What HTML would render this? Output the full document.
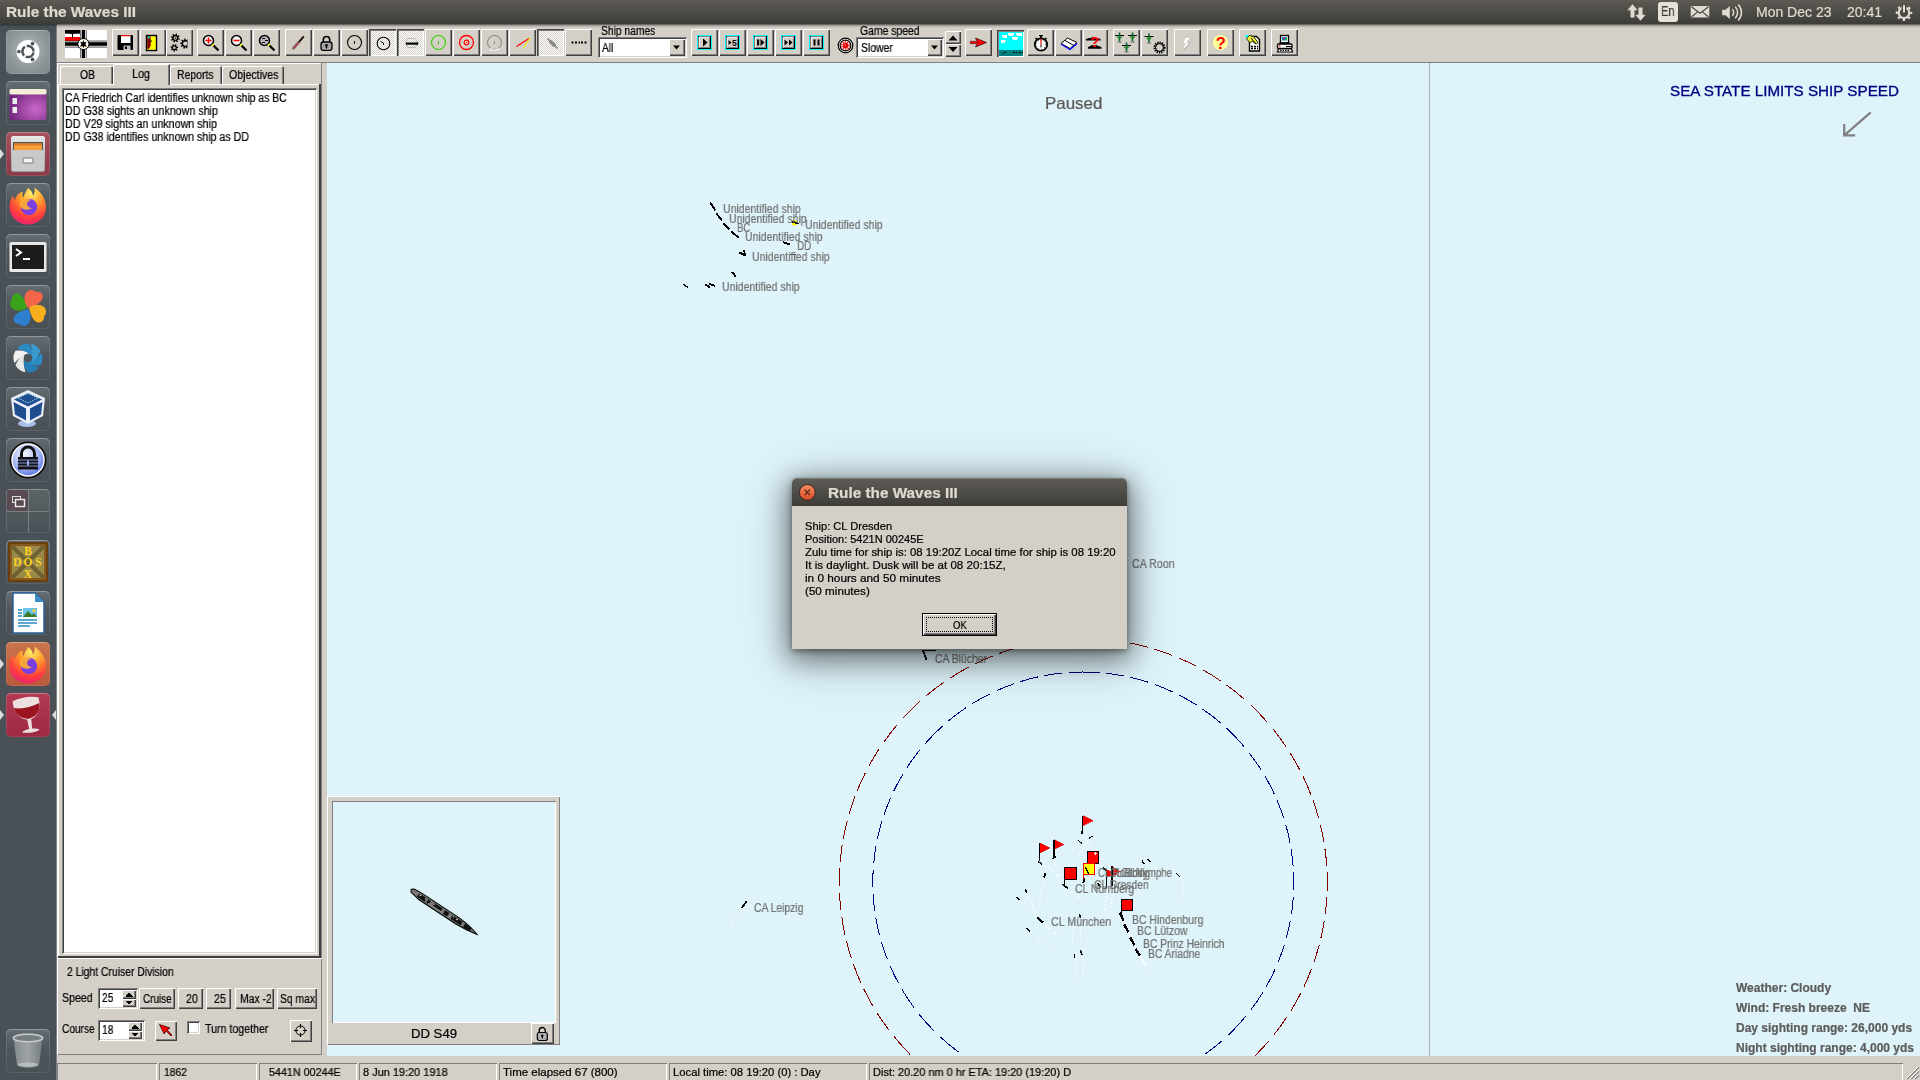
<!DOCTYPE html>
<html><head><meta charset="utf-8"><title>Rule the Waves III</title><style>
html,body{margin:0;padding:0;}
body{width:1920px;height:1080px;overflow:hidden;position:relative;background:#d4d0c8;font-family:"Liberation Sans",sans-serif;}
div{position:absolute;box-sizing:border-box;}
.t{position:absolute;white-space:pre;transform-origin:0 0;will-change:transform;-webkit-text-stroke:.22px;}
.a{position:absolute;overflow:visible;}
</style></head>
<body>
<div style="left:56px;top:24px;width:1864px;height:1056px;background:#d4d0c8;"></div>
<div style="left:327px;top:63px;width:1593px;height:993px;background:#def3fa;"></div>
<div style="left:57px;top:62px;width:1863px;height:1px;background:#808080;"></div>
<div style="left:57px;top:63px;width:264px;height:1px;background:#fff;"></div>
<div style="left:321px;top:63px;width:1px;height:992px;background:#808080;"></div>
<div style="left:1429px;top:63px;width:1px;height:993px;background:#a8aeb0;"></div>
<div style="left:0px;top:0px;width:1920px;height:24px;background:linear-gradient(#5d5b54,#3d3c38);"></div>
<span class="t" style="left:6.0px;top:5px;font-size:14px;line-height:14px;color:#dfdbd2;font-weight:bold;transform:scaleX(1.0969);">Rule the Waves III</span>
<span class="t" style="left:1755.5px;top:5px;font-size:14px;line-height:14px;color:#dfdbd2;">Mon Dec 23</span>
<span class="t" style="left:1847.0px;top:5px;font-size:14px;line-height:14px;color:#dfdbd2;">20:41</span>
<div style="left:1658px;top:2px;width:20px;height:20px;background:#e6e1d8;border-radius:3px;"></div>
<span class="t" style="left:1661.3px;top:3px;font-size:15px;line-height:15px;color:#3c3b37;transform:scaleX(0.7353);">En</span>
<svg class="a" style="left:1626px;top:3px" width="22" height="19"><path d="M6.500 1.200l5.200 6h-3.200v7.300h-4v-7.300h-3.200z" fill="#dfdbd2"/><path d="M14.500 17.800l-5.200-6h3.200v-7.300h4v7.300h3.200z" fill="#dfdbd2"/></svg>
<svg class="a" style="left:1690px;top:5px" width="21" height="14"><rect x=".7" y="1" width="18.600" height="11.500" rx="1" fill="#dfdbd2"/><path d="M1.500 1.800l8.500 6.400 8.500-6.400M1.500 12l6.300-5.300M18.500 12l-6.300-5.300" fill="none" stroke="#44433e" stroke-width="1.100"/></svg>
<svg class="a" style="left:1721px;top:3px" width="24" height="19"><path d="M1.200 6.800h3.300l4.300-3.800v13l-4.300-3.800h-3.300z" fill="#dfdbd2"/><path d="M11.300 6.300a4.500 4.500 0 0 1 0 6.400M14.200 3.800a8 8 0 0 1 0 11.400M17.200 1.600a11.300 11.300 0 0 1 0 15.800" fill="none" stroke="#dfdbd2" stroke-width="1.500"/></svg>
<svg class="a" style="left:1894px;top:3px" width="20" height="19"><circle cx="10" cy="9.800" r="5.300" fill="none" stroke="#dfdbd2" stroke-width="2.200"/><circle cx="10" cy="9.800" r="7.200" fill="none" stroke="#dfdbd2" stroke-width="2.200" stroke-dasharray="2.400 3.250" stroke-dashoffset="1.200"/><rect x="7.800" y="1" width="4.400" height="9" fill="#4a4944"/><rect x="9" y="2" width="2" height="7.500" fill="#dfdbd2"/></svg>
<div style="left:0px;top:24px;width:56px;height:1056px;background:#495156;"></div>
<div style="left:56px;top:24px;width:1px;height:1056px;background:#7d8387;"></div>
<div style="left:57px;top:64px;width:1px;height:991px;background:#fff;"></div>
<div style="left:58px;top:84px;width:262px;height:1px;background:#fff;"></div>
<div style="left:58px;top:84px;width:1px;height:873px;background:#fff;"></div>
<div style="left:319px;top:84px;width:2px;height:874px;background:#404040;"></div>
<div style="left:58px;top:956px;width:263px;height:2px;background:#404040;"></div>
<div style="left:60px;top:66px;width:53px;height:18px;background:#d4d0c8;border-radius:2px 2px 0 0;box-shadow:inset 1px 1px #fff,inset -1px 0 #404040,inset -2px 0 #808080;"></div>
<span class="t" style="left:79.5px;top:69px;font-size:12px;line-height:12px;color:#000;transform:scaleX(0.8649);">OB</span>
<div style="left:170px;top:66px;width:52px;height:18px;background:#d4d0c8;border-radius:2px 2px 0 0;box-shadow:inset 1px 1px #fff,inset -1px 0 #404040,inset -2px 0 #808080;"></div>
<span class="t" style="left:176.5px;top:69px;font-size:12px;line-height:12px;color:#000;transform:scaleX(0.8684);">Reports</span>
<div style="left:222px;top:66px;width:62px;height:18px;background:#d4d0c8;border-radius:2px 2px 0 0;box-shadow:inset 1px 1px #fff,inset -1px 0 #404040,inset -2px 0 #808080;"></div>
<span class="t" style="left:228.5px;top:69px;font-size:12px;line-height:12px;color:#000;transform:scaleX(0.8834);">Objectives</span>
<div style="left:113px;top:64px;width:57px;height:21px;background:#d4d0c8;border-radius:2px 2px 0 0;box-shadow:inset 1px 1px #fff,inset -1px 0 #404040,inset -2px 0 #808080;"></div>
<span class="t" style="left:132.0px;top:68px;font-size:12px;line-height:12px;color:#000;transform:scaleX(0.8986);">Log</span>
<div style="left:62px;top:88px;width:255px;height:866px;background:#fff;box-shadow:inset 1px 1px #808080,inset -1px -1px #fff,inset 2px 2px #404040,inset -2px -2px #d4d0c8;"></div>
<span class="t" style="left:65.4px;top:92px;font-size:12px;line-height:12px;color:#000;transform:scaleX(0.8706);">CA Friedrich Carl identifies unknown ship as BC</span>
<span class="t" style="left:65.4px;top:105px;font-size:12px;line-height:12px;color:#000;transform:scaleX(0.8919);">DD G38 sights an unknown ship</span>
<span class="t" style="left:65.4px;top:118px;font-size:12px;line-height:12px;color:#000;transform:scaleX(0.8930);">DD V29 sights an unknown ship</span>
<span class="t" style="left:65.4px;top:131px;font-size:12px;line-height:12px;color:#000;transform:scaleX(0.8870);">DD G38 identifies unknown ship as DD</span>
<div style="left:57px;top:958px;width:265px;height:97px;background:#d4d0c8;box-shadow:inset 1px 1px #fff,inset -1px -1px #808080;"></div>
<span class="t" style="left:66.6px;top:966px;font-size:12px;line-height:12px;color:#000;transform:scaleX(0.8647);">2 Light Cruiser Division</span>
<span class="t" style="left:61.5px;top:992px;font-size:12px;line-height:12px;color:#000;transform:scaleX(0.8846);">Speed</span>
<span class="t" style="left:61.5px;top:1023px;font-size:12px;line-height:12px;color:#000;transform:scaleX(0.8452);">Course</span>
<div style="left:98px;top:988px;width:40px;height:21px;background:#fff;box-shadow:inset 1px 1px #808080,inset -1px -1px #fff,inset 2px 2px #404040,inset -2px -2px #d4d0c8;"></div>
<span class="t" style="left:101.6px;top:992px;font-size:12px;line-height:12px;color:#000;transform:scaleX(0.8533);">25</span>
<div style="left:98px;top:1020px;width:47px;height:21px;background:#fff;box-shadow:inset 1px 1px #808080,inset -1px -1px #fff,inset 2px 2px #404040,inset -2px -2px #d4d0c8;"></div>
<span class="t" style="left:101.6px;top:1024px;font-size:12px;line-height:12px;color:#000;transform:scaleX(0.8533);">18</span>
<div style="left:122px;top:990px;width:14px;height:9px;background:#d4d0c8;box-shadow:inset 1px 1px #fff,inset -1px -1px #404040,inset -2px -2px #808080;"></div>
<div style="left:122px;top:999px;width:14px;height:8px;background:#d4d0c8;box-shadow:inset 1px 1px #fff,inset -1px -1px #404040,inset -2px -2px #808080;"></div>
<svg class="a" style="left:122px;top:990px" width="14" height="17" shape-rendering="crispEdges"><path d="M3.5 6.5h7l-3.5-4z M3.5 10.5h7l-3.5 4z" fill="#000"/></svg>
<div style="left:128px;top:1022px;width:14px;height:9px;background:#d4d0c8;box-shadow:inset 1px 1px #fff,inset -1px -1px #404040,inset -2px -2px #808080;"></div>
<div style="left:128px;top:1031px;width:14px;height:8px;background:#d4d0c8;box-shadow:inset 1px 1px #fff,inset -1px -1px #404040,inset -2px -2px #808080;"></div>
<svg class="a" style="left:128px;top:1022px" width="14" height="17" shape-rendering="crispEdges"><path d="M3.5 6.5h7l-3.5-4z M3.5 10.5h7l-3.5 4z" fill="#000"/></svg>
<div style="left:139px;top:988px;width:36px;height:21px;background:#d4d0c8;box-shadow:inset 1px 1px #fff,inset -1px -1px #404040,inset -2px -2px #808080;"></div>
<span class="t" style="left:142.6px;top:993px;font-size:12px;line-height:12px;color:#000;transform:scaleX(0.8274);">Cruise</span>
<div style="left:178px;top:988px;width:25px;height:21px;background:#d4d0c8;box-shadow:inset 1px 1px #fff,inset -1px -1px #404040,inset -2px -2px #808080;"></div>
<span class="t" style="left:185.5px;top:993px;font-size:12px;line-height:12px;color:#000;transform:scaleX(0.8833);">20</span>
<div style="left:206px;top:988px;width:25px;height:21px;background:#d4d0c8;box-shadow:inset 1px 1px #fff,inset -1px -1px #404040,inset -2px -2px #808080;"></div>
<span class="t" style="left:213.6px;top:993px;font-size:12px;line-height:12px;color:#000;transform:scaleX(0.8833);">25</span>
<div style="left:235px;top:988px;width:39px;height:21px;background:#d4d0c8;box-shadow:inset 1px 1px #fff,inset -1px -1px #404040,inset -2px -2px #808080;"></div>
<span class="t" style="left:239.6px;top:993px;font-size:12px;line-height:12px;color:#000;transform:scaleX(0.8641);">Max -2</span>
<div style="left:277px;top:988px;width:40px;height:21px;background:#d4d0c8;box-shadow:inset 1px 1px #fff,inset -1px -1px #404040,inset -2px -2px #808080;"></div>
<span class="t" style="left:280.4px;top:993px;font-size:12px;line-height:12px;color:#000;transform:scaleX(0.8602);">Sq max</span>
<div style="left:155px;top:1021px;width:22px;height:20px;background:#d4d0c8;box-shadow:inset 1px 1px #fff,inset -1px -1px #404040,inset -2px -2px #808080;"></div>
<svg class="a" style="left:155px;top:1021px" width="22" height="20"><path d="M4.5 3.5 L9.2 13 L11 9.8 L16 15 L17 14 L12 8.8 L15 7z" fill="#f00" stroke="#400" stroke-width="0.8"/></svg>
<div style="left:187px;top:1021px;width:13px;height:13px;background:#fff;box-shadow:inset 1px 1px #808080,inset -1px -1px #fff,inset 2px 2px #404040,inset -2px -2px #d4d0c8;"></div>
<span class="t" style="left:204.8px;top:1023px;font-size:12px;line-height:12px;color:#000;transform:scaleX(0.8854);">Turn together</span>
<div style="left:290px;top:1020px;width:22px;height:22px;background:#d4d0c8;box-shadow:inset 1px 1px #fff,inset -1px -1px #404040,inset -2px -2px #808080;"></div>
<svg class="a" style="left:290px;top:1020px" width="22" height="22"><circle cx="10.5" cy="10.5" r="4.6" fill="none" stroke="#000" stroke-width="1"/><path d="M10.5 4v4M10.5 13v4M4 10.5h4M13 10.5h4" stroke="#000" stroke-width="1"/></svg>
<div style="left:57px;top:1063px;width:100px;height:17px;box-shadow:inset 1px 1px #808080,inset -1px 0 #fff;"></div>
<div style="left:159px;top:1063px;width:98px;height:17px;box-shadow:inset 1px 1px #808080,inset -1px 0 #fff;"></div>
<div style="left:259px;top:1063px;width:98px;height:17px;box-shadow:inset 1px 1px #808080,inset -1px 0 #fff;"></div>
<div style="left:359px;top:1063px;width:138px;height:17px;box-shadow:inset 1px 1px #808080,inset -1px 0 #fff;"></div>
<div style="left:499px;top:1063px;width:168px;height:17px;box-shadow:inset 1px 1px #808080,inset -1px 0 #fff;"></div>
<div style="left:669px;top:1063px;width:198px;height:17px;box-shadow:inset 1px 1px #808080,inset -1px 0 #fff;"></div>
<div style="left:869px;top:1063px;width:1034px;height:17px;box-shadow:inset 1px 1px #808080,inset -1px 0 #fff;"></div>
<div style="left:57px;top:1062px;width:1863px;height:1px;background:#d4d0c8;"></div>
<span class="t" style="left:164.0px;top:1067px;font-size:11px;line-height:11px;color:#000;transform:scaleX(0.9394);">1862</span>
<span class="t" style="left:269.3px;top:1067px;font-size:11px;line-height:11px;color:#000;transform:scaleX(0.9768);">5441N 00244E</span>
<span class="t" style="left:362.7px;top:1067px;font-size:11px;line-height:11px;color:#000;transform:scaleX(0.9949);">8 Jun 19:20 1918</span>
<span class="t" style="left:503.0px;top:1067px;font-size:11px;line-height:11px;color:#000;transform:scaleX(1.0451);">Time elapsed 67 (800)</span>
<span class="t" style="left:673.0px;top:1067px;font-size:11px;line-height:11px;color:#000;transform:scaleX(1.0222);">Local time: 08 19:20 (0) : Day</span>
<span class="t" style="left:873.0px;top:1067px;font-size:11px;line-height:11px;color:#000;transform:scaleX(0.9944);">Dist: 20.20 nm 0 hr ETA: 19:20 (19:20) D</span>
<svg class="a" style="left:1904px;top:1064px" width="16" height="16"><path d="M15 3L3 15M15 7L7 15M15 11L11 15" stroke="#808080" stroke-width="1.5"/><path d="M15 2L2 15M15 6L6 15M15 10L10 15" stroke="#fff" stroke-width="1"/></svg>
<div style="left:56px;top:24px;width:1864px;height:1px;background:rgba(0,0,0,0.5);"></div>
<div style="left:56px;top:25px;width:1864px;height:1px;background:rgba(0,0,0,0.26);"></div>
<div style="left:56px;top:26px;width:1864px;height:1px;background:rgba(0,0,0,0.1);"></div>
<div style="left:56px;top:27px;width:1864px;height:1px;background:rgba(0,0,0,0.035);"></div>
<div style="left:0px;top:24px;width:56px;height:3px;background:linear-gradient(rgba(0,0,0,.35),rgba(0,0,0,0));"></div>
<svg class="a" style="left:65px;top:30px" width="42" height="28" viewBox="0 0 42 28"><rect x="0" y="0" width="42" height="28" fill="#fff"/><rect x="0" y="0" width="15" height="3.700" fill="#000"/><rect x="0" y="7" width="15" height="4" fill="#f00"/><path d="M7.500 1.500v7M5 3.500h5" stroke="#000" stroke-width="1"/><rect x="0" y="12.200" width="42" height="3.600" fill="#000"/><rect x="0" y="10.700" width="42" height=".700" fill="#000"/><rect x="0" y="16.700" width="42" height=".700" fill="#000"/><rect x="16.700" y="0" width="3.400" height="28" fill="#000"/><rect x="15.200" y="0" width=".800" height="28" fill="#555"/><rect x="20.900" y="0" width=".800" height="28" fill="#555"/><circle cx="18.400" cy="14" r="5.600" fill="#fff" stroke="#000" stroke-width="1"/><path d="M18.400 10l1 2.500 2.500-1-1.500 2.500 1.500 3-2.500-1-1 2-1-2-2.500 1 1.500-3-1.500-2.500 2.500 1z" fill="#000"/><circle cx="16.500" cy="16.500" r=".700" fill="#c80"/><circle cx="20.300" cy="16.500" r=".700" fill="#c80"/><circle cx="18.400" cy="9.800" r=".600" fill="#f80"/></svg>
<div style="left:112px;top:29px;width:27px;height:27px;background:#d4d0c8;box-shadow:inset 1px 1px #fff,inset -1px -1px #404040,inset -2px -2px #808080;"></div>
<svg class="a" style="left:112.0px;top:29px" width="27" height="27" viewBox="0 0 27 27"><path d="M6.5 6h13.5a1 1 0 0 1 1 1v13a1 1 0 0 1-1 1h-13.500a1 1 0 0 1-1-1v-13a1 1 0 0 1 1-1z" fill="#000"/><rect x="9" y="6" width="9.500" height="8" fill="#fff"/><rect x="9" y="6" width="9.500" height="1.200" fill="#f00"/><rect x="11.500" y="16.500" width="7" height="4.500" fill="#c0c0c0"/><rect x="13" y="17.500" width="2" height="2.500" fill="#000"/></svg>
<div style="left:140px;top:29px;width:26px;height:27px;background:#d4d0c8;box-shadow:inset 1px 1px #fff,inset -1px -1px #404040,inset -2px -2px #808080;"></div>
<svg class="a" style="left:139.5px;top:29px" width="27" height="27" viewBox="0 0 27 27"><rect x="6.500" y="6.500" width="10" height="15" fill="#ff0" stroke="#000" stroke-width="1.400"/><path d="M7.200 7.200h3.500v9l-1.500 3.500h-2z" fill="#800000"/><rect x="8" y="7.500" width="1.800" height="1.800" fill="#0ff"/><rect x="10.500" y="11.500" width="1.300" height="1.300" fill="#000"/></svg>
<div style="left:166px;top:29px;width:27px;height:27px;background:#d4d0c8;box-shadow:inset 1px 1px #fff,inset -1px -1px #404040,inset -2px -2px #808080;"></div>
<svg class="a" style="left:166.0px;top:29px" width="27" height="27" viewBox="0 0 27 27"><svg x="0" y="0" width="21.500" height="27" viewBox="0 0 21.500 27"><path d="M22.83 15.32L24.23 16.26L23.70 17.38L22.08 16.89L21.54 17.42L22.00 19.04L20.88 19.55L19.96 18.14L19.21 18.20L18.52 19.74L17.33 19.41L17.53 17.73L16.92 17.30L15.40 18.03L14.70 17.02L15.93 15.86L15.74 15.13L14.10 14.72L14.22 13.50L15.91 13.40L16.23 12.72L15.24 11.35L16.12 10.49L17.47 11.50L18.16 11.19L18.28 9.50L19.50 9.40L19.89 11.05L20.62 11.25L21.79 10.04L22.80 10.75L22.04 12.26L22.46 12.88L24.14 12.71L24.45 13.90L22.90 14.57Z" fill="#000"/><circle cx="19.3" cy="14.6" r="2.2" fill="#d4d0c8"/></svg><path d="M12.40 9.00L13.85 9.65L13.52 10.83L11.94 10.62L11.49 11.19L12.06 12.68L10.99 13.28L10.02 12.01L9.30 12.10L8.65 13.55L7.47 13.22L7.68 11.64L7.11 11.19L5.62 11.76L5.02 10.69L6.29 9.72L6.20 9.00L4.75 8.35L5.08 7.17L6.66 7.38L7.11 6.81L6.54 5.32L7.61 4.72L8.58 5.99L9.30 5.90L9.95 4.45L11.13 4.78L10.92 6.36L11.49 6.81L12.98 6.24L13.58 7.31L12.31 8.28Z" fill="#000"/><circle cx="9.3" cy="9" r="1.7" fill="#d4d0c8"/><circle cx="9.300" cy="9" r="0.700" fill="#000"/><path d="M10.60 19.77L11.60 20.88L10.82 21.77L9.59 20.94L8.97 21.21L8.73 22.68L7.55 22.63L7.43 21.14L6.84 20.83L5.54 21.56L4.84 20.60L5.93 19.58L5.80 18.92L4.42 18.36L4.74 17.22L6.21 17.43L6.65 16.92L6.23 15.50L7.32 15.03L8.07 16.31L8.74 16.34L9.59 15.12L10.64 15.68L10.10 17.07L10.50 17.61L11.98 17.51L12.20 18.68L10.78 19.13Z" fill="#000"/><circle cx="8.3" cy="18.8" r="1.3" fill="#d4d0c8"/></svg>
<div style="left:197px;top:29px;width:27px;height:27px;background:#d4d0c8;box-shadow:inset 1px 1px #fff,inset -1px -1px #404040,inset -2px -2px #808080;"></div>
<svg class="a" style="left:197.0px;top:29px" width="27" height="27" viewBox="0 0 27 27"><circle cx="11.5" cy="11.5" r="5" fill="#f4f4f4" stroke="#000" stroke-width="1.5"/><path d="M15.3 15.3L17 17" stroke="#ff0" stroke-width="2"/><path d="M16.6 16.6L21.5 21.5" stroke="#000" stroke-width="2.2"/><path d="M8.5 11.5h6M11.5 8.5v6" stroke="#f00" stroke-width="1.5"/></svg>
<div style="left:225px;top:29px;width:27px;height:27px;background:#d4d0c8;box-shadow:inset 1px 1px #fff,inset -1px -1px #404040,inset -2px -2px #808080;"></div>
<svg class="a" style="left:225.0px;top:29px" width="27" height="27" viewBox="0 0 27 27"><circle cx="11.5" cy="11.5" r="5" fill="#f4f4f4" stroke="#000" stroke-width="1.5"/><path d="M15.3 15.3L17 17" stroke="#ff0" stroke-width="2"/><path d="M16.6 16.6L21.5 21.5" stroke="#000" stroke-width="2.2"/><path d="M8.5 11.5h6" stroke="#f00" stroke-width="1.5"/></svg>
<div style="left:253px;top:29px;width:27px;height:27px;background:#d4d0c8;box-shadow:inset 1px 1px #fff,inset -1px -1px #404040,inset -2px -2px #808080;"></div>
<svg class="a" style="left:253.0px;top:29px" width="27" height="27" viewBox="0 0 27 27"><circle cx="11.5" cy="11.5" r="5" fill="#b8b8b8" stroke="#000" stroke-width="1.5"/><path d="M15.3 15.3L17 17" stroke="#ff0" stroke-width="2"/><path d="M16.6 16.6L21.5 21.5" stroke="#000" stroke-width="2.2"/><path d="M9 9.5h3M12 11.5h3M9 13.5h3" stroke="#000" stroke-width="1"/></svg>
<div style="left:285px;top:29px;width:27px;height:27px;background:#d4d0c8;box-shadow:inset 1px 1px #fff,inset -1px -1px #404040,inset -2px -2px #808080;"></div>
<svg class="a" style="left:285.0px;top:29px" width="27" height="27" viewBox="0 0 27 27"><path d="M18.800 7.300L12.800 14.300" stroke="#201008" stroke-width="2"/><path d="M13.800 13L7.600 20.300" stroke="#808080" stroke-width="3.200"/><path d="M13.800 13.500L8.600 19.500" stroke="#e00" stroke-width="1"/></svg>
<div style="left:313px;top:29px;width:27px;height:27px;background:#d4d0c8;box-shadow:inset 1px 1px #fff,inset -1px -1px #404040,inset -2px -2px #808080;"></div>
<svg class="a" style="left:313.0px;top:29px" width="27" height="27" viewBox="0 0 27 27"><path d="M10.300 13v-2.300a3.200 3.200 0 0 1 6.400 0v2.300" fill="none" stroke="#000" stroke-width="1.600"/><rect x="8" y="13" width="11" height="8.300" rx="2.400" fill="#b0b0b0" stroke="#000" stroke-width="1.300"/><path d="M9 16h9M9 18.300h9" stroke="#888" stroke-width="0.800"/><circle cx="13.500" cy="16.300" r="1.300" fill="#000"/><rect x="12.900" y="16.500" width="1.200" height="3" fill="#000"/></svg>
<div style="left:341px;top:29px;width:27px;height:27px;background:#d4d0c8;box-shadow:inset 1px 1px #fff,inset -1px -1px #404040,inset -2px -2px #808080;"></div>
<svg class="a" style="left:341.0px;top:29px" width="27" height="27" viewBox="0 0 27 27"><circle cx="13.500" cy="13.500" r="7" fill="none" stroke="#000" stroke-width="1.100"/><rect x="13" y="12" width="1" height="3" fill="#000"/></svg>
<div style="left:369px;top:29px;width:27px;height:27px;background:repeating-conic-gradient(#fff 0 25%,#d4d0c8 0 50%) 0 0/2px 2px;box-shadow:inset 1px 1px #404040,inset 2px 2px #808080,inset -1px -1px #fff;"></div>
<svg class="a" style="left:369.0px;top:29px" width="27" height="27" viewBox="0 0 27 27"><circle cx="14.500" cy="14.500" r="6.300" fill="none" stroke="#000" stroke-width="1.100"/><path d="M11.500 12.500l3 1.500v2" fill="none" stroke="#000" stroke-width="1"/></svg>
<div style="left:397px;top:29px;width:27px;height:27px;background:repeating-conic-gradient(#fff 0 25%,#d4d0c8 0 50%) 0 0/2px 2px;box-shadow:inset 1px 1px #404040,inset 2px 2px #808080,inset -1px -1px #fff;"></div>
<svg class="a" style="left:397.0px;top:29px" width="27" height="27" viewBox="0 0 27 27"><path d="M11 9.500h7l3 4.500-3 4.500h-7l-3-4.500z" fill="none" stroke="#b8b8b8" stroke-width="1"/><rect x="9" y="13.500" width="11" height="2.200" fill="#000"/><path d="M20 12.500l1.500 2-1.500 2z" fill="#000"/></svg>
<div style="left:425px;top:29px;width:27px;height:27px;background:#d4d0c8;box-shadow:inset 1px 1px #fff,inset -1px -1px #404040,inset -2px -2px #808080;"></div>
<svg class="a" style="left:425.0px;top:29px" width="27" height="27" viewBox="0 0 27 27"><circle cx="13.500" cy="13.500" r="7" fill="none" stroke="#3c0" stroke-width="1.100"/><rect x="13" y="12" width="1" height="3" fill="#3c0"/></svg>
<div style="left:453px;top:29px;width:27px;height:27px;background:#d4d0c8;box-shadow:inset 1px 1px #fff,inset -1px -1px #404040,inset -2px -2px #808080;"></div>
<svg class="a" style="left:453.0px;top:29px" width="27" height="27" viewBox="0 0 27 27"><circle cx="13.500" cy="13.500" r="7" fill="none" stroke="#f00" stroke-width="1.300"/><circle cx="13.500" cy="13.500" r="2.300" fill="none" stroke="#f00" stroke-width="1.200"/><rect x="13" y="13" width="1" height="1" fill="#f00"/></svg>
<div style="left:481px;top:29px;width:27px;height:27px;background:#d4d0c8;box-shadow:inset 1px 1px #fff,inset -1px -1px #404040,inset -2px -2px #808080;"></div>
<svg class="a" style="left:481.0px;top:29px" width="27" height="27" viewBox="0 0 27 27"><circle cx="13.500" cy="13.500" r="7" fill="none" stroke="#909090" stroke-width="1.200"/><path d="M9 19.500a7 7 0 0 0 9 0" fill="none" stroke="#fff" stroke-width="1.200"/><rect x="13" y="12" width="1" height="3" fill="#909090"/></svg>
<div style="left:509px;top:29px;width:27px;height:27px;background:#d4d0c8;box-shadow:inset 1px 1px #fff,inset -1px -1px #404040,inset -2px -2px #808080;"></div>
<svg class="a" style="left:509.0px;top:29px" width="27" height="27" viewBox="0 0 27 27"><path d="M7.500 17.500L20 9.500" stroke="#f00" stroke-width="1.200"/><path d="M14 19.500L21 9" stroke="#ee0" stroke-width="1.200"/></svg>
<div style="left:537px;top:29px;width:27px;height:27px;background:repeating-conic-gradient(#fff 0 25%,#d4d0c8 0 50%) 0 0/2px 2px;box-shadow:inset 1px 1px #404040,inset 2px 2px #808080,inset -1px -1px #fff;"></div>
<svg class="a" style="left:537.0px;top:29px" width="27" height="27" viewBox="0 0 27 27"><path d="M10.500 9.500L20.500 19.500" stroke="#888" stroke-width="1.600"/><path d="M13 12l5 5" stroke="#888" stroke-width="3.400"/></svg>
<div style="left:565px;top:29px;width:27px;height:27px;background:#d4d0c8;box-shadow:inset 1px 1px #fff,inset -1px -1px #404040,inset -2px -2px #808080;"></div>
<svg class="a" style="left:565.0px;top:29px" width="27" height="27" viewBox="0 0 27 27"><path d="M6.500 13.500h15" stroke="#000" stroke-width="2" stroke-dasharray="2 1.500 2 1.500 1.500 1 2 1.500 2"/></svg>
<div style="left:965px;top:29px;width:27px;height:27px;background:#d4d0c8;box-shadow:inset 1px 1px #fff,inset -1px -1px #404040,inset -2px -2px #808080;"></div>
<svg class="a" style="left:965.0px;top:29px" width="27" height="27" viewBox="0 0 27 27"><path d="M5 13.500h8" stroke="#f00" stroke-width="2.200"/><path d="M10.500 9l11 4.500-11 4.500 2-4.500z" fill="#f00" stroke="#000" stroke-width="0.600"/><path d="M5 12.300h6M5 14.700h6" stroke="#000" stroke-width="0.500"/></svg>
<div style="left:1027px;top:29px;width:27px;height:27px;background:#d4d0c8;box-shadow:inset 1px 1px #fff,inset -1px -1px #404040,inset -2px -2px #808080;"></div>
<svg class="a" style="left:1027.0px;top:29px" width="27" height="27" viewBox="0 0 27 27"><circle cx="14" cy="15.500" r="6.200" fill="#fff" stroke="#000" stroke-width="1.800"/><rect x="13" y="6.500" width="2" height="2.500" fill="#000"/><path d="M12 6.500h4" stroke="#000" stroke-width="1"/><path d="M8.500 9l1.500 1.500M19.500 9L18 10.500" stroke="#000" stroke-width="1.600"/><path d="M14 15.500v-6" stroke="#f00" stroke-width="1.200"/><path d="M14 15.500v3" stroke="#000" stroke-width="1"/><circle cx="14" cy="15.500" r="4.600" fill="none" stroke="#000" stroke-width="0.900" stroke-dasharray="0.800 2.200"/></svg>
<div style="left:1055px;top:29px;width:27px;height:27px;background:#d4d0c8;box-shadow:inset 1px 1px #fff,inset -1px -1px #404040,inset -2px -2px #808080;"></div>
<svg class="a" style="left:1055.0px;top:29px" width="27" height="27" viewBox="0 0 27 27"><path d="M6 14.500l6.500-5.500 9.500 4.500-7 6z" fill="#fff" stroke="#000" stroke-width="1"/><path d="M10 11.500l9 5" stroke="#000" stroke-width="1"/><path d="M6 15l9 5.500 7-6" fill="none" stroke="#00f" stroke-width="1.300"/></svg>
<div style="left:1083px;top:29px;width:25px;height:27px;background:#d4d0c8;box-shadow:inset 1px 1px #fff,inset -1px -1px #404040,inset -2px -2px #808080;"></div>
<svg class="a" style="left:1082.0px;top:29px" width="27" height="27" viewBox="0 0 27 27"><path d="M4 11.600v-1.500l3-1.200h2.500l1-1.300 1.500 1.300h3.500l3 1.200v1.500z" fill="#000"/><path d="M6 19.800v-1.800l2.500-1 1.500-1 2 .8 2-1.200 1.500 1.400 2 .3 2 1v1.500z" fill="#000"/><text x="8.300" y="18.300" font-family="Liberation Sans" font-weight="bold" font-size="14.500" fill="#f00">?</text></svg>
<div style="left:1113px;top:29px;width:27px;height:27px;background:#d4d0c8;box-shadow:inset 1px 1px #fff,inset -1px -1px #404040,inset -2px -2px #808080;"></div>
<svg class="a" style="left:1113.0px;top:29px" width="27" height="27" viewBox="0 0 27 27"><path d="M2.0 6.5h9" stroke="#000" stroke-width="1"/><path d="M6.5 3.5v9" stroke="#063" stroke-width="1.600"/><path d="M3.5 7.5h6l-1.500 2h-3z" fill="#2a8a2a"/><path d="M4.5 13.0h4" stroke="#777" stroke-width="1.200"/><path d="M15.0 6.5h9" stroke="#000" stroke-width="1"/><path d="M19.5 3.5v9" stroke="#063" stroke-width="1.600"/><path d="M16.5 7.5h6l-1.500 2h-3z" fill="#2a8a2a"/><path d="M17.5 13.0h4" stroke="#777" stroke-width="1.200"/><path d="M9.0 16.5h9" stroke="#000" stroke-width="1"/><path d="M13.5 13.5v9" stroke="#063" stroke-width="1.600"/><path d="M10.5 17.5h6l-1.500 2h-3z" fill="#2a8a2a"/><path d="M11.5 23.0h4" stroke="#777" stroke-width="1.200"/></svg>
<div style="left:1141px;top:29px;width:27px;height:27px;background:#d4d0c8;box-shadow:inset 1px 1px #fff,inset -1px -1px #404040,inset -2px -2px #808080;"></div>
<svg class="a" style="left:1141.0px;top:29px" width="27" height="27" viewBox="0 0 27 27"><path d="M3.5 7.5h9" stroke="#000" stroke-width="1"/><path d="M8 4.5v9" stroke="#063" stroke-width="1.600"/><path d="M5 8.5h6l-1.500 2h-3z" fill="#2a8a2a"/><path d="M6 14.0h4" stroke="#777" stroke-width="1.200"/><circle cx="18.500" cy="18.500" r="4.800" fill="none" stroke="#000" stroke-width="2.400" stroke-dasharray="1.300 0.900"/><circle cx="18.500" cy="18.500" r="3.900" fill="none" stroke="#000" stroke-width="1"/></svg>
<div style="left:1174px;top:29px;width:27px;height:27px;background:#d4d0c8;box-shadow:inset 1px 1px #fff,inset -1px -1px #404040,inset -2px -2px #808080;"></div>
<svg class="a" style="left:1174.0px;top:29px" width="27" height="27" viewBox="0 0 27 27"><path d="M17 9h-5.500l-2 5h2.500l-3 7 7.500-8.500h-3z" fill="#fff"/><path d="M16.500 9.500l-3 4h3l-7 8" fill="none" stroke="#bbb" stroke-width="1.200"/></svg>
<div style="left:1207px;top:29px;width:27px;height:27px;background:#d4d0c8;box-shadow:inset 1px 1px #fff,inset -1px -1px #404040,inset -2px -2px #808080;"></div>
<svg class="a" style="left:1207.0px;top:29px" width="27" height="27" viewBox="0 0 27 27"><circle cx="13.500" cy="13.500" r="7.500" fill="#ff6" /><circle cx="13.500" cy="13.500" r="7.500" fill="#fff" fill-opacity="0.350"/><text x="8.700" y="19.500" font-family="Liberation Sans" font-weight="bold" font-size="16.500" fill="#f00">?</text></svg>
<div style="left:1239px;top:29px;width:27px;height:27px;background:#d4d0c8;box-shadow:inset 1px 1px #fff,inset -1px -1px #404040,inset -2px -2px #808080;"></div>
<svg class="a" style="left:1239.0px;top:29px" width="27" height="27" viewBox="0 0 27 27"><path d="M10.500 7.500h7l3 3v11.500h-10z" fill="#fff" stroke="#000" stroke-width="1.400"/><path d="M12 17.500h7M12 19.500h7" stroke="#000" stroke-width="1.300" stroke-dasharray="2 1"/><path d="M6 6h4l-3 3.500z" fill="#0ff"/><path d="M7.500 9.500l3-3 4 1 4.500 6-2 1.500-3.500-2.500-3 1z" fill="#ee3" stroke="#000" stroke-width="0.800"/><path d="M12 9l5 6" stroke="#000" stroke-width="1"/></svg>
<div style="left:1271px;top:29px;width:27px;height:27px;background:#d4d0c8;box-shadow:inset 1px 1px #fff,inset -1px -1px #404040,inset -2px -2px #808080;"></div>
<svg class="a" style="left:1271.0px;top:29px" width="27" height="27" viewBox="0 0 27 27"><rect x="9.500" y="6.500" width="8" height="7.500" fill="#fff" stroke="#000" stroke-width="1.300"/><rect x="11" y="8" width="5" height="3.500" fill="#088"/><rect x="12" y="8.500" width="2" height="1.500" fill="#e0e"/><rect x="14" y="9.500" width="1.500" height="1.500" fill="#0c0"/><path d="M8.500 14h10" stroke="#000" stroke-width="1.500"/><rect x="6.500" y="15" width="14.500" height="4.500" rx="1" fill="#fff" stroke="#000" stroke-width="1.300"/><rect x="8" y="16.300" width="1.400" height="1.400" fill="#f00"/><path d="M15 17.500h6" stroke="#000" stroke-width="1"/><path d="M7.500 20l-1 3h15l-1-3z" fill="#fff" stroke="#000" stroke-width="1.200"/><path d="M9 21.500h10" stroke="#000" stroke-width="1" stroke-dasharray="1.500 1"/></svg>
<div style="left:691px;top:29px;width:27px;height:27px;background:#d4d0c8;box-shadow:inset 1px 1px #fff,inset -1px -1px #404040,inset -2px -2px #808080;"></div>
<svg class="a" style="left:697px;top:35px" width="15" height="15" viewBox="0 0 15 15"><rect x="0" y="0" width="15" height="15" fill="#0ff"/><rect x="1" y="1" width="13" height="13" fill="#000"/><rect x="2" y="2" width="11" height="11" fill="#d4d0c8"/><path d="M2 13v-11h11" fill="none" stroke="#fff" stroke-width="1"/><path d="M2.500 12.500h10v-10" fill="none" stroke="#808080" stroke-width="1"/><path d="M6 3.500l4.500 4-4.500 4z" fill="#000"/></svg>
<div style="left:719px;top:29px;width:27px;height:27px;background:#d4d0c8;box-shadow:inset 1px 1px #fff,inset -1px -1px #404040,inset -2px -2px #808080;"></div>
<svg class="a" style="left:725px;top:35px" width="15" height="15" viewBox="0 0 15 15"><rect x="0" y="0" width="15" height="15" fill="#0ff"/><rect x="1" y="1" width="13" height="13" fill="#000"/><rect x="2" y="2" width="11" height="11" fill="#d4d0c8"/><path d="M2 13v-11h11" fill="none" stroke="#fff" stroke-width="1"/><path d="M2.500 12.500h10v-10" fill="none" stroke="#808080" stroke-width="1"/><path d="M3.500 5l3 2.500-3 2.500z" fill="#000"/><text x="7" y="10.500" font-family="Liberation Sans" font-weight="bold" font-size="8.500" fill="#000">5</text></svg>
<div style="left:747px;top:29px;width:27px;height:27px;background:#d4d0c8;box-shadow:inset 1px 1px #fff,inset -1px -1px #404040,inset -2px -2px #808080;"></div>
<svg class="a" style="left:753px;top:35px" width="15" height="15" viewBox="0 0 15 15"><rect x="0" y="0" width="15" height="15" fill="#0ff"/><rect x="1" y="1" width="13" height="13" fill="#000"/><rect x="2" y="2" width="11" height="11" fill="#d4d0c8"/><path d="M2 13v-11h11" fill="none" stroke="#fff" stroke-width="1"/><path d="M2.500 12.500h10v-10" fill="none" stroke="#808080" stroke-width="1"/><rect x="4" y="4.500" width="2.200" height="6" fill="#000"/><path d="M7.500 4l4 3.500-4 3.500z" fill="#000"/></svg>
<div style="left:775px;top:29px;width:27px;height:27px;background:#d4d0c8;box-shadow:inset 1px 1px #fff,inset -1px -1px #404040,inset -2px -2px #808080;"></div>
<svg class="a" style="left:781px;top:35px" width="15" height="15" viewBox="0 0 15 15"><rect x="0" y="0" width="15" height="15" fill="#0ff"/><rect x="1" y="1" width="13" height="13" fill="#000"/><rect x="2" y="2" width="11" height="11" fill="#d4d0c8"/><path d="M2 13v-11h11" fill="none" stroke="#fff" stroke-width="1"/><path d="M2.500 12.500h10v-10" fill="none" stroke="#808080" stroke-width="1"/><path d="M3.500 4.500l3.500 3-3.500 3z" fill="#000"/><path d="M8 4.500l3.500 3-3.500 3z" fill="#000"/></svg>
<div style="left:803px;top:29px;width:27px;height:27px;background:#d4d0c8;box-shadow:inset 1px 1px #fff,inset -1px -1px #404040,inset -2px -2px #808080;"></div>
<svg class="a" style="left:809px;top:35px" width="15" height="15" viewBox="0 0 15 15"><rect x="0" y="0" width="15" height="15" fill="#0ff"/><rect x="1" y="1" width="13" height="13" fill="#000"/><rect x="2" y="2" width="11" height="11" fill="#d4d0c8"/><path d="M2 13v-11h11" fill="none" stroke="#fff" stroke-width="1"/><path d="M2.500 12.500h10v-10" fill="none" stroke="#808080" stroke-width="1"/><rect x="4.500" y="4.500" width="2" height="6" fill="#000"/><rect x="8.500" y="4.500" width="2" height="6" fill="#000"/></svg>
<span class="t" style="left:600.7px;top:25px;font-size:12px;line-height:12px;color:#000;transform:scaleX(0.8568);">Ship names</span>
<div style="left:598px;top:37px;width:89px;height:21px;background:#fff;box-shadow:inset 1px 1px #808080,inset -1px -1px #fff,inset 2px 2px #404040,inset -2px -2px #d4d0c8;"></div>
<span class="t" style="left:602.0px;top:42px;font-size:12px;line-height:12px;color:#000;transform:scaleX(0.8393);">All</span>
<div style="left:669px;top:39px;width:16px;height:17px;background:#d4d0c8;box-shadow:inset 1px 1px #fff,inset -1px -1px #404040,inset -2px -2px #808080;"></div>
<svg class="a" style="left:669px;top:39px" width="15" height="17" viewBox="0 0 15 17"><path d="M4 6.500h7l-3.500 4z" fill="#000"/></svg>
<svg class="a" style="left:837px;top:37px" width="17" height="17" viewBox="0 0 17 17"><circle cx="8.500" cy="8.500" r="7.300" fill="#fff" stroke="#000" stroke-width="1.200"/><circle cx="8.500" cy="8.500" r="5.400" fill="#fff" stroke="#000" stroke-width="1.200"/><circle cx="8.500" cy="8.500" r="3.900" fill="#fff" stroke="#f00" stroke-width="1.200" stroke-dasharray="1.400 1.050"/><circle cx="8.500" cy="8.500" r="2.900" fill="#e00000"/><circle cx="8" cy="8" r="1" fill="#f55"/></svg>
<span class="t" style="left:859.7px;top:25px;font-size:12px;line-height:12px;color:#000;transform:scaleX(0.8673);">Game speed</span>
<div style="left:856px;top:37px;width:88px;height:21px;background:#fff;box-shadow:inset 1px 1px #808080,inset -1px -1px #fff,inset 2px 2px #404040,inset -2px -2px #d4d0c8;"></div>
<span class="t" style="left:860.5px;top:42px;font-size:12px;line-height:12px;color:#000;transform:scaleX(0.8668);">Slower</span>
<div style="left:927px;top:39px;width:15px;height:17px;background:#d4d0c8;box-shadow:inset 1px 1px #fff,inset -1px -1px #404040,inset -2px -2px #808080;"></div>
<svg class="a" style="left:927px;top:39px" width="15" height="17" viewBox="0 0 15 17"><path d="M4 6.500h7l-3.500 4z" fill="#000"/></svg>
<div style="left:945px;top:31px;width:16px;height:13px;background:#d4d0c8;box-shadow:inset 1px 1px #fff,inset -1px -1px #404040,inset -2px -2px #808080;"></div>
<div style="left:945px;top:44px;width:16px;height:13px;background:#d4d0c8;box-shadow:inset 1px 1px #fff,inset -1px -1px #404040,inset -2px -2px #808080;"></div>
<svg class="a" style="left:945px;top:31px" width="16" height="26" viewBox="0 0 16 26"><path d="M3.500 9.500h9l-4.500-5z M3.500 16h9l-4.500 5z" fill="#000"/></svg>
<div style="left:997px;top:30px;width:27px;height:27px;background:#d4d0c8;box-shadow:inset 1px 1px #404040,inset 2px 2px #808080,inset -1px -1px #fff;"></div>
<svg class="a" style="left:999px;top:32px" width="24" height="24" viewBox="0 0 24 24" shape-rendering="crispEdges"><rect width="24" height="24" fill="#0ff"/><rect y="18" width="24" height="6" fill="#008080"/><path d="M3 4h5M4 5.500h4M9 2h6M10 3.500h4M17 2h6M18 3.500h5M13 6h6M14 7.500h4M2 8.500h5M2 10h4" stroke="#fff" stroke-width="1.400"/><path d="M3 21h1M4.500 20h2M14 20.500h1.500M17 20.500h1M20 20h1.500M22.500 20h1" stroke="#000" stroke-width="1"/></svg>
<svg class="a" style="left:327px;top:63px;overflow:hidden" width="1593" height="993" viewBox="0 0 1593 993" shape-rendering="crispEdges"><path d="M756.3 575.5A244 244 0 0 1 773.4 576.1M779.5 576.6A244 244 0 0 1 797.5 579.0M803.5 580.1A244 244 0 0 1 821.4 584.3M827.5 586.1A244 244 0 0 1 845.4 592.4M851.6 594.9A244 244 0 0 1 869.4 603.3M875.6 606.6A244 244 0 0 1 893.4 617.7M899.6 622.0A244 244 0 0 1 917.4 636.3M923.5 641.8A244 244 0 0 1 940.5 659.5M945.6 665.5A244 244 0 0 1 958.9 683.5M962.8 689.6A244 244 0 0 1 973.1 707.5M976.1 713.5A244 244 0 0 1 983.8 731.4M986.1 737.6A244 244 0 0 1 991.7 755.4M993.3 761.6A244 244 0 0 1 997.0 779.4M997.9 785.6A244 244 0 0 1 999.8 803.4M1000.1 809.5A244 244 0 0 1 1000.2 827.5M999.9 833.6A244 244 0 0 1 998.2 851.4M997.3 857.6A244 244 0 0 1 993.8 875.5M992.3 881.6A244 244 0 0 1 986.8 899.5M984.6 905.6A244 244 0 0 1 977.1 923.4M974.1 929.5A244 244 0 0 1 964.1 947.4M960.2 953.5A244 244 0 0 1 947.2 971.4M942.2 977.5A244 244 0 0 1 925.5 995.3M919.5 1000.9A244 244 0 0 1 901.6 1015.5M895.4 1020.0A244 244 0 0 1 877.5 1031.2M871.4 1034.6A244 244 0 0 1 853.5 1043.3M847.4 1045.8A244 244 0 0 1 829.5 1052.3M823.4 1054.1A244 244 0 0 1 805.6 1058.5M799.4 1059.7A244 244 0 0 1 781.5 1062.2M775.4 1062.8A244 244 0 0 1 757.6 1063.5M751.4 1063.5A244 244 0 0 1 733.6 1062.4M727.5 1061.8A244 244 0 0 1 709.6 1059.0M703.5 1057.7A244 244 0 0 1 685.6 1053.0M679.5 1051.1A244 244 0 0 1 661.6 1044.4M655.4 1041.7A244 244 0 0 1 637.6 1032.7M631.5 1029.2A244 244 0 0 1 613.5 1017.4M607.4 1012.8A244 244 0 0 1 589.5 997.6M583.1 991.4A244 244 0 0 1 567.1 973.6M562.3 967.5A244 244 0 0 1 549.8 949.5M546.1 943.4A244 244 0 0 1 536.6 925.6M533.7 919.5A244 244 0 0 1 526.5 901.5M524.4 895.5A244 244 0 0 1 519.3 877.6M517.9 871.5A244 244 0 0 1 514.7 853.5M513.9 847.4A244 244 0 0 1 512.5 829.6M512.3 823.4A244 244 0 0 1 512.7 805.5M513.1 799.4A244 244 0 0 1 515.3 781.5M516.3 775.5A244 244 0 0 1 520.3 757.6M522.0 751.4A244 244 0 0 1 528.0 733.5M530.3 727.5A244 244 0 0 1 538.5 709.6M541.7 703.4A244 244 0 0 1 552.3 685.6M556.5 679.5A244 244 0 0 1 570.3 661.6M575.7 655.5A244 244 0 0 1 593.5 637.8M599.5 632.5A244 244 0 0 1 617.4 618.9M623.5 614.8A244 244 0 0 1 641.4 604.2M647.5 601.1A244 244 0 0 1 665.4 593.1M671.6 590.7A244 244 0 0 1 689.4 584.8M695.6 583.2A244 244 0 0 1 713.4 579.3M719.6 578.3A244 244 0 0 1 737.4 576.2M743.6 575.8A244 244 0 0 1 756.3 575.5" fill="none" stroke="#800000" stroke-width="1"/><path d="M756.3 609.0A210.5 210.5 0 0 1 773.4 609.7M779.5 610.3A210.5 210.5 0 0 1 797.4 613.1M803.5 614.4A210.5 210.5 0 0 1 821.5 619.3M827.6 621.4A210.5 210.5 0 0 1 845.4 628.8M851.6 631.8A210.5 210.5 0 0 1 869.5 642.0M875.5 646.0A210.5 210.5 0 0 1 893.5 659.8M899.5 665.2A210.5 210.5 0 0 1 917.0 683.5M921.9 689.6A210.5 210.5 0 0 1 934.5 707.5M938.2 713.6A210.5 210.5 0 0 1 947.5 731.4M950.2 737.6A210.5 210.5 0 0 1 956.8 755.4M958.7 761.5A210.5 210.5 0 0 1 963.0 779.5M964.0 785.5A210.5 210.5 0 0 1 966.2 803.4M966.6 809.5A210.5 210.5 0 0 1 966.6 827.5M966.3 833.6A210.5 210.5 0 0 1 964.4 851.4M963.3 857.5A210.5 210.5 0 0 1 959.2 875.4M957.4 881.6A210.5 210.5 0 0 1 951.0 899.4M948.4 905.5A210.5 210.5 0 0 1 939.3 923.5M935.8 929.5A210.5 210.5 0 0 1 923.5 947.4M918.6 953.5A210.5 210.5 0 0 1 901.5 971.9M895.4 977.5A210.5 210.5 0 0 1 877.6 991.5M871.5 995.7A210.5 210.5 0 0 1 853.6 1006.2M847.4 1009.2A210.5 210.5 0 0 1 829.6 1016.8M823.5 1019.0A210.5 210.5 0 0 1 805.6 1024.1M799.5 1025.5A210.5 210.5 0 0 1 781.6 1028.5M775.4 1029.1A210.5 210.5 0 0 1 757.6 1030.0M751.4 1029.9A210.5 210.5 0 0 1 733.6 1028.8M727.4 1028.0A210.5 210.5 0 0 1 709.6 1024.7M703.5 1023.3A210.5 210.5 0 0 1 685.6 1017.8M679.5 1015.5A210.5 210.5 0 0 1 661.6 1007.5M655.5 1004.3A210.5 210.5 0 0 1 637.6 993.3M631.5 989.0A210.5 210.5 0 0 1 613.5 974.2M607.5 968.4A210.5 210.5 0 0 1 591.6 950.6M586.9 944.4A210.5 210.5 0 0 1 575.0 926.5M571.6 920.4A210.5 210.5 0 0 1 562.9 902.6M560.4 896.4A210.5 210.5 0 0 1 554.3 878.6M552.6 872.4A210.5 210.5 0 0 1 548.7 854.6M547.8 848.4A210.5 210.5 0 0 1 546.1 830.6M545.9 824.5A210.5 210.5 0 0 1 546.2 806.5M546.7 800.4A210.5 210.5 0 0 1 549.1 782.6M550.3 776.4A210.5 210.5 0 0 1 554.8 758.5M556.8 752.4A210.5 210.5 0 0 1 563.7 734.6M566.5 728.5A210.5 210.5 0 0 1 576.2 710.6M580.0 704.4A210.5 210.5 0 0 1 593.1 686.6M598.3 680.5A210.5 210.5 0 0 1 615.5 663.0M621.5 657.8A210.5 210.5 0 0 1 639.4 644.4M645.5 640.5A210.5 210.5 0 0 1 663.5 630.6M669.6 627.7A210.5 210.5 0 0 1 687.5 620.6M693.5 618.6A210.5 210.5 0 0 1 711.4 613.8M717.5 612.6A210.5 210.5 0 0 1 735.5 610.0M741.6 609.5A210.5 210.5 0 0 1 756.3 609.0" fill="none" stroke="#000080" stroke-width="1"/><path d="M755.8 772.4L760.0 779.0L764.7 785.7" fill="none" stroke="#fff" stroke-width="1" stroke-dasharray="2 2"/><path d="M761.0 777.6L755.0 787.0L750.6 795.4" fill="none" stroke="#fff" stroke-width="1" stroke-dasharray="2 2"/><path d="M725.4 796.0L729.0 804.0L732.9 813.0" fill="none" stroke="#fff" stroke-width="1" stroke-dasharray="2 2"/><path d="M713.6 800.6L719.5 804.3L728.4 809.4L733.0 815.0" fill="none" stroke="#fff" stroke-width="1" stroke-dasharray="2 2"/><path d="M717.7 812.4L717.3 817.0L714.3 826.5L712.9 837.6L713.0 843.0" fill="none" stroke="#fff" stroke-width="1" stroke-dasharray="2 2"/><path d="M698.5 827.0L700.3 831.7L703.2 839.0L709.0 849.0L713.0 854.0" fill="none" stroke="#fff" stroke-width="1" stroke-dasharray="2 2"/><path d="M691.0 836.0L698.0 839.8L707.0 849.0L716.0 859.0" fill="none" stroke="#fff" stroke-width="1" stroke-dasharray="2 2"/><path d="M716.0 859.0L725.0 869.0L733.0 873.0" fill="none" stroke="#fff" stroke-width="1" stroke-dasharray="2 2"/><path d="M703.0 869.0L713.0 879.0L725.0 887.0" fill="none" stroke="#fff" stroke-width="1" stroke-dasharray="2 2"/><path d="M740.9 825.7L744.0 828.7L755.0 837.6L759.0 840.0" fill="none" stroke="#fff" stroke-width="1" stroke-dasharray="2 2"/><path d="M754.0 855.0L754.0 867.0L753.0 879.0" fill="none" stroke="#fff" stroke-width="1" stroke-dasharray="2 2"/><path d="M747.0 863.0L745.0 875.0L746.0 883.0" fill="none" stroke="#fff" stroke-width="1" stroke-dasharray="2 2"/><path d="M755.0 892.0L757.0 905.0L755.0 912.0" fill="none" stroke="#fff" stroke-width="1" stroke-dasharray="2 2"/><path d="M748.0 895.0L748.0 909.0L751.0 919.0" fill="none" stroke="#fff" stroke-width="1" stroke-dasharray="2 2"/><path d="M781.0 825.0L779.0 837.0L777.0 847.0" fill="none" stroke="#fff" stroke-width="1" stroke-dasharray="2 2"/><path d="M787.0 827.0L785.0 839.0L783.0 845.0" fill="none" stroke="#fff" stroke-width="1" stroke-dasharray="2 2"/><path d="M823.0 799.0L831.0 807.0L839.0 809.0" fill="none" stroke="#fff" stroke-width="1" stroke-dasharray="2 2"/><path d="M853.0 814.0L857.0 823.0L855.0 835.0" fill="none" stroke="#fff" stroke-width="1" stroke-dasharray="2 2"/><path d="M383.1 139.4L388.5 147.5" stroke="#000" stroke-width="2"/><path d="M389.3 150.3L394.8 157.4" stroke="#000" stroke-width="2"/><path d="M396.0 160.4L402.6 166.4" stroke="#000" stroke-width="2"/><path d="M404.0 168.4L411.8 174.6" stroke="#000" stroke-width="2"/><circle cx="467.6" cy="159.8" r="2.8" fill="#ff0"/><path d="M465.0 158.6L471.6 160.6" stroke="#000" stroke-width="2"/><path d="M456.1 179.2L463.0 181.5" stroke="#000" stroke-width="2"/><path d="M412.3 189.6L418.6 192.4" stroke="#000" stroke-width="2"/><path d="M416.6 187.4L418.2 191.5" stroke="#000" stroke-width="1.6"/><path d="M463.4 191.4L468.7 191.4" stroke="#000" stroke-width="1"/><path d="M405.1 209.0L408.8 213.6" stroke="#000" stroke-width="2"/><path d="M356.1 221.1L361.0 224.6" stroke="#000" stroke-width="1.3"/><path d="M378.5 221.5L383.0 224.8" stroke="#000" stroke-width="2"/><path d="M382.0 220.6L388.0 223.0" stroke="#000" stroke-width="2"/><path d="M419.6 838.2L414.6 845.2" stroke="#000" stroke-width="1.8"/><path d="M414.0 845.0L409.0 853.0L404.0 861.0" fill="none" stroke="#fff" stroke-width="1" stroke-dasharray="2 2"/><path d="M609 587.5H596L599.5 597" fill="none" stroke="#000" stroke-width="1.800"/><path d="M801.0 495.5L808.0 492.5L816.0 490.5" fill="none" stroke="#fff" stroke-width="1" stroke-dasharray="2 2"/><path d="M698.0 826.4L699.9 829.5" stroke="#000" stroke-width="1.6"/><path d="M689.2 834.2L693.0 836.8" stroke="#000" stroke-width="1.3"/><path d="M710.2 854.2L715.8 859.3" stroke="#000" stroke-width="2.2"/><path d="M699.2 865.1L702.8 868.3" stroke="#000" stroke-width="1.4"/><path d="M752.4 851.0L753.6 855.1" stroke="#000" stroke-width="1.5"/><path d="M753.2 887.0L754.9 891.8" stroke="#000" stroke-width="1.6"/><path d="M747.4 890.8L747.8 894.5" stroke="#000" stroke-width="1.5"/><path d="M718.5 810.0L717.0 814.5" stroke="#000" stroke-width="1.8"/><path d="M815.0 797.5L817.0 801.0" stroke="#000" stroke-width="1.6"/><path d="M821.0 796.0L823.0 799.0" stroke="#000" stroke-width="1.6"/><path d="M849.0 810.0L853.0 814.0" stroke="#000" stroke-width="1.3"/><path d="M762.0 775.3L766.0 772.8" stroke="#000" stroke-width="1"/><path d="M751.5 777.5L755.0 780.5" stroke="#000" stroke-width="1"/><path d="M771.0 820.0L773.0 824.0" stroke="#000" stroke-width="1.6"/><path d="M794.5 853L813 893L818 902" fill="none" stroke="#fff" stroke-width="1.500"/><path d="M818.0 902.0L824.0 910.0" fill="none" stroke="#fff" stroke-width="1" stroke-dasharray="2 2"/><path d="M792.8 849.5L796.6 857.6" stroke="#000" stroke-width="2.4"/><path d="M797.2 861.6L801.6 869.4" stroke="#000" stroke-width="2.4"/><path d="M803.2 874.4L807.5 882.4" stroke="#000" stroke-width="2.4"/><path d="M808.4 885.6L812.8 892.6" stroke="#000" stroke-width="2.4"/><path d="M755.5 752.5l10 5-10 5z" fill="#f00" stroke="#c00" stroke-width=".500"/><path d="M755.5 752.5V769" stroke="#000" stroke-width="1.200"/><path d="M755.3 768.0L754.5 771.5" stroke="#000" stroke-width="1.8"/><path d="M712.8 780l10 5-10 5z" fill="#f00" stroke="#c00" stroke-width=".500"/><path d="M712.8 780V798" stroke="#000" stroke-width="1.200"/><path d="M711.0 798.5L715.0 801.0" stroke="#000" stroke-width="1.4"/><path d="M727 776.5l10 5-10 5z" fill="#f00" stroke="#c00" stroke-width=".500"/><path d="M727 776.5V794" stroke="#000" stroke-width="1.200"/><path d="M729.0 793.5L725.0 796.0" stroke="#000" stroke-width="1.4"/><path d="M779.5 806l8 4.500-8 4.500z" fill="#f00"/><path d="M779.5 805.5V824.5" stroke="#000" stroke-width="1.200"/><path d="M785 803.5l9 5-9 5z" fill="#f00"/><path d="M785 803V821" stroke="#000" stroke-width="1.200"/><path d="M776.5 804.5L779.5 808.0" stroke="#000" stroke-width="1.4"/><path d="M784.5 819.0L785.5 823.0" stroke="#000" stroke-width="1.8"/><rect x="760.5" y="788.5" width="11" height="12" fill="#f00" stroke="#000" stroke-width="1"/><path d="M767 790.5h2.500M768.2 789.3v2.500" stroke="#fff" stroke-width="1"/><rect x="756.5" y="800.5" width="11" height="11" fill="#ff0" stroke="#f00" stroke-width="1"/><path d="M756.5 812V816" stroke="#f00" stroke-width="1.200"/><path d="M758.2 804.0L759.8 807.0" stroke="#000" stroke-width="1.4"/><path d="M759.8 807.0L761.6 810.6" stroke="#000" stroke-width="1.4"/><path d="M757.8 815.5L756.3 820.0" stroke="#000" stroke-width="1.8"/><rect x="737.5" y="804.5" width="12" height="12" fill="#f00" stroke="#000" stroke-width="1"/><path d="M737.5 817V822" stroke="#000" stroke-width="1.200"/><path d="M735.3 820.8L740.9 825.7" stroke="#000" stroke-width="1.5"/><rect x="794.5" y="836.5" width="11" height="11" fill="#f00" stroke="#000" stroke-width="1"/><path d="M794.5 848V852" stroke="#000" stroke-width="1.200"/></svg>
<span class="t" style="left:722.6px;top:203px;font-size:12px;line-height:12px;color:#727272;transform:scaleX(0.8768);">Unidentified ship</span>
<span class="t" style="left:728.7px;top:213px;font-size:12px;line-height:12px;color:#727272;transform:scaleX(0.8745);">Unidentified ship</span>
<span class="t" style="left:736.8px;top:222px;font-size:12px;line-height:12px;color:#727272;transform:scaleX(0.7918);">BC</span>
<span class="t" style="left:805.0px;top:219px;font-size:12px;line-height:12px;color:#727272;transform:scaleX(0.8745);">Unidentified ship</span>
<span class="t" style="left:744.6px;top:231px;font-size:12px;line-height:12px;color:#727272;transform:scaleX(0.8745);">Unidentified ship</span>
<span class="t" style="left:796.7px;top:240px;font-size:12px;line-height:12px;color:#727272;transform:scaleX(0.8245);">DD</span>
<span class="t" style="left:751.6px;top:251px;font-size:12px;line-height:12px;color:#727272;transform:scaleX(0.8756);">Unidentified ship</span>
<span class="t" style="left:721.8px;top:281px;font-size:12px;line-height:12px;color:#727272;transform:scaleX(0.8745);">Unidentified ship</span>
<span class="t" style="left:1131.8px;top:558px;font-size:12px;line-height:12px;color:#727272;transform:scaleX(0.8869);">CA Roon</span>
<span class="t" style="left:934.7px;top:653px;font-size:12px;line-height:12px;color:#727272;transform:scaleX(0.8662);">CA Blücher</span>
<span class="t" style="left:753.7px;top:902px;font-size:12px;line-height:12px;color:#727272;transform:scaleX(0.8627);">CA Leipzig</span>
<span class="t" style="left:1121.0px;top:867px;font-size:12px;line-height:12px;color:#727272;transform:scaleX(0.8105);">CL Nymphe</span>
<span class="t" style="left:1097.8px;top:867px;font-size:12px;line-height:12px;color:#727272;transform:scaleX(0.7990);">CL Rostock</span>
<span class="t" style="left:1110.0px;top:867px;font-size:12px;line-height:12px;color:#727272;transform:scaleX(0.7753);">CL Elbing</span>
<span class="t" style="left:1094.3px;top:879px;font-size:12px;line-height:12px;color:#727272;transform:scaleX(0.8601);">CL Dresden</span>
<span class="t" style="left:1074.9px;top:883px;font-size:12px;line-height:12px;color:#727272;transform:scaleX(0.8657);">CL Nürnberg</span>
<span class="t" style="left:1051.0px;top:916px;font-size:12px;line-height:12px;color:#727272;transform:scaleX(0.8906);">CL München</span>
<span class="t" style="left:1131.8px;top:914px;font-size:12px;line-height:12px;color:#727272;transform:scaleX(0.8688);">BC Hindenburg</span>
<span class="t" style="left:1136.7px;top:925px;font-size:12px;line-height:12px;color:#727272;transform:scaleX(0.8702);">BC Lützow</span>
<span class="t" style="left:1142.8px;top:938px;font-size:12px;line-height:12px;color:#727272;transform:scaleX(0.8606);">BC Prinz Heinrich</span>
<span class="t" style="left:1147.8px;top:948px;font-size:12px;line-height:12px;color:#727272;transform:scaleX(0.8599);">BC Ariadne</span>
<span class="t" style="left:1044.8px;top:95px;font-size:16.5px;line-height:16.5px;color:#5a5654;transform:scaleX(1.0256);">Paused</span>
<span class="t" style="left:1670.3px;top:84px;font-size:14px;line-height:14px;color:#000080;transform:scaleX(1.0856);-webkit-text-stroke:.3px #000080;">SEA STATE LIMITS SHIP SPEED</span>
<svg class="a" style="left:1838px;top:106px" width="40" height="36"><path d="M32.700 6.400L6.200 29.400M6.200 18v11.400h11" fill="none" stroke="#808080" stroke-width="2.200"/></svg>
<span class="t" style="left:1735.9px;top:982px;font-size:12px;line-height:12px;color:#5c5c5c;font-weight:bold;">Weather: Cloudy</span>
<span class="t" style="left:1735.9px;top:1002px;font-size:12px;line-height:12px;color:#5c5c5c;font-weight:bold;">Wind: Fresh breeze  NE</span>
<span class="t" style="left:1735.9px;top:1022px;font-size:12px;line-height:12px;color:#5c5c5c;font-weight:bold;">Day sighting range: 26,000 yds</span>
<span class="t" style="left:1735.9px;top:1042px;font-size:12px;line-height:12px;color:#5c5c5c;font-weight:bold;">Night sighting range: 4,000 yds</span>
<div style="left:327px;top:796px;width:233px;height:249px;background:#d4d0c8;box-shadow:inset 1px 1px #fff,inset -1px -1px #808080;"></div>
<div style="left:332px;top:801px;width:224px;height:222px;background:#def3fa;box-shadow:inset 1px 1px #808080,inset -1px -1px #fff;"></div>
<svg class="a" style="left:0px;top:0px" width="1" height="1"><g transform="translate(410.6 890) rotate(33.4)"><path d="M0 -1L2.500 -2.800L12 -3.500L56 -3.500Q70 -2.800 80 .500Q69 3 56 3.500L12 3.500L1.500 1.600Z" fill="#787878" stroke="#000" stroke-width="1"/><path d="M9 0H72" stroke="#111" stroke-width="4.200" stroke-dasharray="9 2 3 4 10 3 5 4 12 3"/><path d="M10 -1H70" stroke="#eee" stroke-width="1" stroke-dasharray="2 5 1 9 1 22 1 3 2 30"/><path d="M22 1.500H40" stroke="#888" stroke-width="1.500"/></g></svg>
<span class="t" style="left:411.0px;top:1028px;font-size:12px;line-height:12px;color:#000;transform:scaleX(1.0944);">DD S49</span>
<div style="left:531px;top:1023px;width:23px;height:21px;background:#d4d0c8;box-shadow:inset 1px 1px #fff,inset -1px -1px #404040,inset -2px -2px #808080;"></div>
<svg class="a" style="left:531px;top:1023px" width="23" height="21"><path d="M8.300 9.500v-2a3 3 0 0 1 6 0v2" fill="none" stroke="#000" stroke-width="1.400"/><rect x="6.300" y="9.500" width="10" height="8" rx="2" fill="#b0b0b0" stroke="#000" stroke-width="1.200"/><circle cx="11.300" cy="12.800" r="1.200" fill="#000"/><rect x="10.800" y="13" width="1" height="2.500" fill="#000"/></svg>
<div style="left:6px;top:30px;width:44px;height:44px;background:radial-gradient(circle at 50% 45%,#b9bfc2,#8d9599 60%,#7e878b);border-radius:5px;box-shadow:inset 0 0 0 1px rgba(255,255,255,.10),inset 0 1px 0 rgba(255,255,255,.22);"></div>
<svg class="a" style="left:6px;top:30px" width="44" height="44" viewBox="0 0 44 44"><circle cx="22" cy="21.500" r="11.500" fill="#fff"/><circle cx="22" cy="21.500" r="5.600" fill="none" stroke="#4d5459" stroke-width="2.500" stroke-dasharray="9.930 1.800" stroke-dashoffset="-0.900"/><circle cx="12.900" cy="21.500" r="1.850" fill="#4d5459"/><circle cx="26.550" cy="13.600" r="1.850" fill="#4d5459"/><circle cx="26.550" cy="29.400" r="1.850" fill="#4d5459"/></svg>
<div style="left:6px;top:81px;width:44px;height:44px;background:linear-gradient(#666d72,#4f565b 45%,#4a5156);border-radius:5px;box-shadow:inset 0 0 0 1px rgba(255,255,255,.10),inset 0 1px 0 rgba(255,255,255,.22);"></div>
<svg class="a" style="left:6px;top:81px" width="44" height="44" viewBox="0 0 44 44"><defs><radialGradient id="pg" cx=".7" cy=".65" r=".8"><stop offset="0" stop-color="#c968c9"/><stop offset="1" stop-color="#6b1f78"/></radialGradient></defs><rect x="3.500" y="8" width="37" height="31" rx="2.500" fill="url(#pg)"/><rect x="3.500" y="8" width="37" height="5.500" rx="1.500" fill="#f2eed8"/><rect x="6.500" y="17" width="4.500" height="6" fill="#eee"/><rect x="6.500" y="26" width="4.500" height="6" fill="#eee"/></svg>
<div style="left:6px;top:132px;width:44px;height:44px;background:linear-gradient(#a4525e,#8a3b48);border-radius:5px;box-shadow:inset 0 0 0 1px rgba(255,255,255,.10),inset 0 1px 0 rgba(255,255,255,.22);"></div>
<svg class="a" style="left:6px;top:132px" width="44" height="44" viewBox="0 0 44 44"><defs><linearGradient id="fg" x1="0" y1="0" x2="0" y2="1"><stop offset="0" stop-color="#e8e8e8"/><stop offset="1" stop-color="#9a9a9a"/></linearGradient></defs><rect x="5" y="4" width="34" height="36" rx="2" fill="url(#fg)"/><rect x="7" y="10" width="30" height="9" fill="#555"/><rect x="8" y="11.500" width="28" height="7" fill="#f5a03a"/><rect x="8" y="11.500" width="28" height="2" fill="#e27a20"/><rect x="6" y="18" width="32" height="21" rx="1.500" fill="#c9c9c9"/><rect x="17" y="26" width="10" height="5" rx="1" fill="#f4f4f4" stroke="#777" stroke-width="1"/></svg>
<svg class="a" style="left:0px;top:149px" width="5" height="10" viewBox="0 0 5 10"><path d="M0 0l4 5-4 5z" fill="#ddd"/></svg>
<div style="left:6px;top:183px;width:44px;height:44px;background:linear-gradient(#666d72,#4f565b 45%,#4a5156);border-radius:5px;box-shadow:inset 0 0 0 1px rgba(255,255,255,.10),inset 0 1px 0 rgba(255,255,255,.22);"></div>
<svg class="a" style="left:6px;top:183px" width="44" height="44" viewBox="0 0 44 44"><defs><radialGradient id="ff183" cx=".6" cy=".15" r=".95"><stop offset="0" stop-color="#fff36b"/><stop offset=".35" stop-color="#ff9a2a"/><stop offset=".7" stop-color="#ff3c3c"/><stop offset="1" stop-color="#e21a86"/></radialGradient></defs><path d="M22 5c4 3 5 6 5 8 2-3 2-6 1.500-8.500 6 4 11.500 11 11.500 19.500 0 10-8 17.500-18 17.500s-18.500-7.500-18.500-17.500c0-5 1.500-9 4-11.500 0 2 .5 3.500 1.500 4.500 1-4 4-7.500 8-8.500-1 2-1 4 .5 6 1-4 2.500-6.500 4.500-9.500z" fill="url(#ff183)"/><circle cx="23" cy="24" r="8.200" fill="#7b3fe0"/><path d="M14 19c3-3 8-4 12-2-3 0-5 2-5 4s2 4 5 4c-4 3-10 2-12-2z" fill="#ffb02e" fill-opacity=".9"/></svg>
<div style="left:6px;top:234px;width:44px;height:44px;background:linear-gradient(#666d72,#4f565b 45%,#4a5156);border-radius:5px;box-shadow:inset 0 0 0 1px rgba(255,255,255,.10),inset 0 1px 0 rgba(255,255,255,.22);"></div>
<svg class="a" style="left:6px;top:234px" width="44" height="44" viewBox="0 0 44 44"><rect x="3.500" y="8" width="37" height="30" rx="1.500" fill="#e8e8e8"/><rect x="6" y="11" width="32" height="24" fill="#1c1c1c"/><path d="M10 15l5 3.500-5 3.500" fill="none" stroke="#fff" stroke-width="2"/><path d="M17 25h7" stroke="#fff" stroke-width="2"/></svg>
<div style="left:6px;top:285px;width:44px;height:44px;background:linear-gradient(#666d72,#4f565b 45%,#4a5156);border-radius:5px;box-shadow:inset 0 0 0 1px rgba(255,255,255,.10),inset 0 1px 0 rgba(255,255,255,.22);"></div>
<svg class="a" style="left:6px;top:285px" width="44" height="44" viewBox="0 0 44 44"><path d="M22 23c-6-6-4-18 3-18 3 0 5 2 5 2s4-1 6 2c4 6-6 12-14 14z" fill="#f4664a"/><path d="M23 23c6-6 18-3 17 4 0 3-2 4-2 4s1 4-3 6c-6 3-10-6-12-14z" fill="#f9ae1e"/><path d="M22 24c5 7 2 17-4 17-3 0-4-2-4-2s-4 1-6-3c-2-6 6-10 14-12z" fill="#2f7fd0"/><path d="M21 23c-7 5-17 2-17-4 0-3 2-4 2-4s-1-4 3-6c6-3 10 6 12 14z" fill="#3aa31c"/></svg>
<div style="left:6px;top:336px;width:44px;height:44px;background:linear-gradient(#666d72,#4f565b 45%,#4a5156);border-radius:5px;box-shadow:inset 0 0 0 1px rgba(255,255,255,.10),inset 0 1px 0 rgba(255,255,255,.22);"></div>
<svg class="a" style="left:6px;top:336px" width="44" height="44" viewBox="0 0 44 44"><g transform="translate(22 22)"><path d="M13.63 -4.96A14.5 14.5 0 0 1 12.56 7.25Q4.01 8.61 -1.78 4.89Q5.32 3.73 13.63 -4.96Z" fill="#2b8cc4"/><path d="M11.11 9.32A14.5 14.5 0 0 1 0.00 14.50Q-5.45 7.78 -5.12 0.90Q-0.57 6.48 11.11 9.32Z" fill="#2580b8"/><path d="M-2.52 14.28A14.5 14.5 0 0 1 -12.56 7.25Q-9.46 -0.83 -3.34 -3.98Q-5.89 2.75 -2.52 14.28Z" fill="#e8e8e8"/><path d="M-13.63 4.96A14.5 14.5 0 0 1 -12.56 -7.25Q-4.01 -8.61 1.78 -4.89Q-5.32 -3.73 -13.63 4.96Z" fill="#f2f2f2"/><path d="M-11.11 -9.32A14.5 14.5 0 0 1 -0.00 -14.50Q5.45 -7.78 5.12 -0.90Q0.57 -6.48 -11.11 -9.32Z" fill="#2b8cc4"/><path d="M2.52 -14.28A14.5 14.5 0 0 1 12.56 -7.25Q9.46 0.83 3.34 3.98Q5.89 -2.75 2.52 -14.28Z" fill="#3a9ad0"/></g></svg>
<div style="left:6px;top:387px;width:44px;height:44px;background:linear-gradient(#666d72,#4f565b 45%,#4a5156);border-radius:5px;box-shadow:inset 0 0 0 1px rgba(255,255,255,.10),inset 0 1px 0 rgba(255,255,255,.22);"></div>
<svg class="a" style="left:6px;top:387px" width="44" height="44" viewBox="0 0 44 44"><ellipse cx="21" cy="36.500" rx="9" ry="3.500" fill="#a9c0e8"/><path d="M5 11l17-8 17 8-2 18-15 8-15-8z" fill="#e9eef8"/><path d="M8 12.500l14-6.500 14 6.500-14 7z" fill="#1d4d8f"/><path d="M7.500 15l12.500 6.500v12l-11-6z" fill="#1d4d8f"/><path d="M36.500 15l-12.500 6.500v12l11-6z" fill="#1d4d8f"/><path d="M12 11l10-4.500 10 4.500-10 5z" fill="none" stroke="#cfe" stroke-width=".800" stroke-dasharray="1.500 1"/></svg>
<div style="left:6px;top:438px;width:44px;height:44px;background:linear-gradient(#666d72,#4f565b 45%,#4a5156);border-radius:5px;box-shadow:inset 0 0 0 1px rgba(255,255,255,.10),inset 0 1px 0 rgba(255,255,255,.22);"></div>
<svg class="a" style="left:6px;top:438px" width="44" height="44" viewBox="0 0 44 44"><defs><radialGradient id="kg" cx=".4" cy=".3" r=".8"><stop offset="0" stop-color="#f4f6ff"/><stop offset=".6" stop-color="#9fb0f2"/><stop offset="1" stop-color="#4a66e0"/></radialGradient></defs><circle cx="22" cy="22" r="18.500" fill="#111"/><circle cx="22" cy="22" r="16.700" fill="#fff"/><circle cx="22" cy="22" r="15.300" fill="url(#kg)"/><path d="M15.500 19v-3.500a6.500 6.500 0 0 1 13 0v3.500" fill="none" stroke="#111" stroke-width="3"/><rect x="12" y="19" width="20" height="12.500" fill="#111"/><path d="M12 22h20M12 25h20M12 28h20" stroke="#8ea2f0" stroke-width=".900"/><rect x="21" y="22.500" width="2" height="5" fill="#9fb0f2"/></svg>
<div style="left:6px;top:489px;width:44px;height:44px;background:linear-gradient(#5d6468,#4a5156);border-radius:5px;box-shadow:inset 0 0 0 1px rgba(255,255,255,.10),inset 0 1px 0 rgba(255,255,255,.22);"></div>
<svg class="a" style="left:6px;top:489px" width="44" height="44" viewBox="0 0 44 44"><rect x="1" y="1" width="21" height="21" rx="3" fill="#5a4a52"/><path d="M22.500 1v42M1 22.500h42" stroke="#7b8286" stroke-width="1"/><rect x="6.500" y="7.500" width="8" height="6" fill="none" stroke="#ddd" stroke-width="1"/><rect x="9.500" y="10.500" width="9" height="7" fill="#5a4a52" stroke="#eee" stroke-width="1.400"/></svg>
<div style="left:6px;top:540px;width:44px;height:44px;background:linear-gradient(#666d72,#4f565b 45%,#4a5156);border-radius:5px;box-shadow:inset 0 0 0 1px rgba(255,255,255,.10),inset 0 1px 0 rgba(255,255,255,.22);"></div>
<svg class="a" style="left:6px;top:540px" width="44" height="44" viewBox="0 0 44 44"><rect x="3" y="3" width="38" height="38" fill="#8a5a1c"/><rect x="6" y="6" width="32" height="32" fill="#9a8a4a"/><path d="M6 6l32 32M38 6l-32 32" stroke="#6f6232" stroke-width="4"/><rect x="3" y="3" width="38" height="38" fill="none" stroke="#6a3f10" stroke-width="2"/><g font-family="Liberation Serif" font-weight="bold" font-size="11.500" fill="#ffd21f" text-anchor="middle"><text x="22" y="14.500">B</text><text x="11.500" y="26">D</text><text x="22" y="26">O</text><text x="32.500" y="26">S</text><text x="22" y="37.500">X</text></g></svg>
<div style="left:6px;top:591px;width:44px;height:44px;background:linear-gradient(#666d72,#4f565b 45%,#4a5156);border-radius:5px;box-shadow:inset 0 0 0 1px rgba(255,255,255,.10),inset 0 1px 0 rgba(255,255,255,.22);"></div>
<svg class="a" style="left:6px;top:591px" width="44" height="44" viewBox="0 0 44 44"><path d="M7 2h22l9 9v31h-31z" fill="#fff" stroke="#2a6099" stroke-width="1.500"/><path d="M29 2l9 9h-9z" fill="#3a8fc7"/><rect x="17" y="17" width="14" height="9" fill="#6cc3e8"/><path d="M17 26l5-6 4 4 2-2 3 4z" fill="#3a7a2a"/><circle cx="28" cy="19.500" r="1.500" fill="#ffd21f"/><path d="M12 19h4M12 22h4M12 25h4M12 29h19M12 32h19M12 35h12" stroke="#2a8ac4" stroke-width="1.600"/></svg>
<div style="left:6px;top:642px;width:44px;height:44px;background:linear-gradient(#c9744d,#b9593a);border-radius:5px;box-shadow:inset 0 0 0 1px rgba(255,255,255,.10),inset 0 1px 0 rgba(255,255,255,.22);"></div>
<svg class="a" style="left:6px;top:642px" width="44" height="44" viewBox="0 0 44 44"><defs><radialGradient id="ff642" cx=".6" cy=".15" r=".95"><stop offset="0" stop-color="#fff36b"/><stop offset=".35" stop-color="#ff9a2a"/><stop offset=".7" stop-color="#ff3c3c"/><stop offset="1" stop-color="#e21a86"/></radialGradient></defs><path d="M22 5c4 3 5 6 5 8 2-3 2-6 1.500-8.500 6 4 11.500 11 11.500 19.500 0 10-8 17.500-18 17.500s-18.500-7.500-18.500-17.500c0-5 1.500-9 4-11.500 0 2 .5 3.500 1.500 4.500 1-4 4-7.500 8-8.500-1 2-1 4 .5 6 1-4 2.500-6.500 4.500-9.500z" fill="url(#ff642)"/><circle cx="23" cy="24" r="8.200" fill="#7b3fe0"/><path d="M14 19c3-3 8-4 12-2-3 0-5 2-5 4s2 4 5 4c-4 3-10 2-12-2z" fill="#ffb02e" fill-opacity=".9"/></svg>
<svg class="a" style="left:0px;top:659px" width="5" height="10" viewBox="0 0 5 10"><path d="M0 0l4 5-4 5z" fill="#ddd"/></svg>
<div style="left:6px;top:693px;width:44px;height:44px;background:linear-gradient(#b23a52,#9c2842);border-radius:5px;box-shadow:inset 0 0 0 1px rgba(255,255,255,.10),inset 0 1px 0 rgba(255,255,255,.22);"></div>
<svg class="a" style="left:6px;top:693px" width="44" height="44" viewBox="0 0 44 44"><g transform="rotate(-9 22 22)"><path d="M9 6q13-4 26 0c1.500 10-2 18-10.500 20.500l-.5 9.500q6 .5 7 2.500-7 2.500-17.500 0 1-2 7.500-2.500l-.5-9.500c-8.500-2.500-12.500-10.500-11.500-20.500z" fill="#f3eeee" fill-opacity=".92"/><path d="M9.200 13q12 3.500 25.800-1c0 8-4 12.500-12.500 14-8-1-12.800-6-13.300-13z" fill="#9c1420"/></g></svg>
<svg class="a" style="left:0px;top:710px" width="5" height="10" viewBox="0 0 5 10"><path d="M0 0l4 5-4 5z" fill="#ddd"/></svg>
<svg class="a" style="left:51px;top:710px" width="5" height="10" viewBox="0 0 5 10"><path d="M5 0l-4 5 4 5z" fill="#ddd"/></svg>
<div style="left:6px;top:1029px;width:44px;height:44px;background:linear-gradient(#666d72,#4f565b 45%,#4a5156);border-radius:5px;box-shadow:inset 0 0 0 1px rgba(255,255,255,.10),inset 0 1px 0 rgba(255,255,255,.22);"></div>
<svg class="a" style="left:6px;top:1029px" width="44" height="44" viewBox="0 0 44 44"><defs><linearGradient id="tg" x1="0" y1="0" x2="1" y2="0"><stop offset="0" stop-color="#8d9497"/><stop offset=".5" stop-color="#aab0b3"/><stop offset="1" stop-color="#7c8386"/></linearGradient></defs><path d="M7.500 9l3.500 27c2 3.500 20 3.500 22 0l3.500-27z" fill="url(#tg)" fill-opacity=".85"/><ellipse cx="22" cy="9" rx="14.700" ry="3.800" fill="#767d80" stroke="#c9cdcf" stroke-width="1.600"/><ellipse cx="22" cy="35.500" rx="10" ry="2" fill="#c0c5c7" fill-opacity=".8"/></svg>
<div style="left:792px;top:478px;width:335px;height:171px;background:#d4d0c8;border-radius:5px 5px 0 0;box-shadow:0 2px 6px rgba(0,0,0,.4),0 7px 26px 4px rgba(0,0,0,.42),0 8px 50px 6px rgba(0,0,0,.22);"></div>
<div style="left:792px;top:478px;width:335px;height:28px;background:linear-gradient(#5f5d56,#3e3d39);border-radius:5px 5px 0 0;box-shadow:inset 0 1px rgba(255,255,255,.18);"></div>
<svg class="a" style="left:798px;top:483px" width="19" height="19"><defs><linearGradient id="cb" x1="0" y1="0" x2="0" y2="1"><stop offset="0" stop-color="#f58d64"/><stop offset="1" stop-color="#d94a22"/></linearGradient></defs><circle cx="9.300" cy="9.400" r="7.900" fill="url(#cb)" stroke="#3a2a22" stroke-width="1"/><path d="M6.600 6.700l5.400 5.400M12 6.700l-5.400 5.400" stroke="#4a2016" stroke-width="1.150"/></svg>
<span class="t" style="left:827.5px;top:486px;font-size:14px;line-height:14px;color:#dfdbd2;font-weight:bold;transform:scaleX(1.0944);">Rule the Waves III</span>
<span class="t" style="left:804.5px;top:521px;font-size:11px;line-height:11px;color:#000;transform:scaleX(1.0078);">Ship: CL Dresden</span>
<span class="t" style="left:804.5px;top:534px;font-size:11px;line-height:11px;color:#000;">Position: 5421N 00245E</span>
<span class="t" style="left:804.5px;top:547px;font-size:11px;line-height:11px;color:#000;transform:scaleX(1.0349);">Zulu time for ship is: 08 19:20Z Local time for ship is 08 19:20</span>
<span class="t" style="left:804.5px;top:560px;font-size:11px;line-height:11px;color:#000;transform:scaleX(1.0526);">It is daylight. Dusk will be at 08 20:15Z,</span>
<span class="t" style="left:804.5px;top:573px;font-size:11px;line-height:11px;color:#000;transform:scaleX(1.0711);">in 0 hours and 50 minutes</span>
<span class="t" style="left:804.5px;top:586px;font-size:11px;line-height:11px;color:#000;transform:scaleX(1.0599);">(50 minutes)</span>
<div style="left:922px;top:613px;width:75px;height:23px;background:#d4d0c8;border:1px solid #000;box-shadow:inset 1px 1px #fff,inset -1px -1px #404040,inset -2px -2px #808080;"></div>
<div style="left:926px;top:617px;width:67px;height:15px;border:1px dotted #000;"></div>
<span class="t" style="left:952.8px;top:620px;font-size:11px;line-height:11px;color:#000;transform:scaleX(0.8676);">OK</span>
</body></html>
